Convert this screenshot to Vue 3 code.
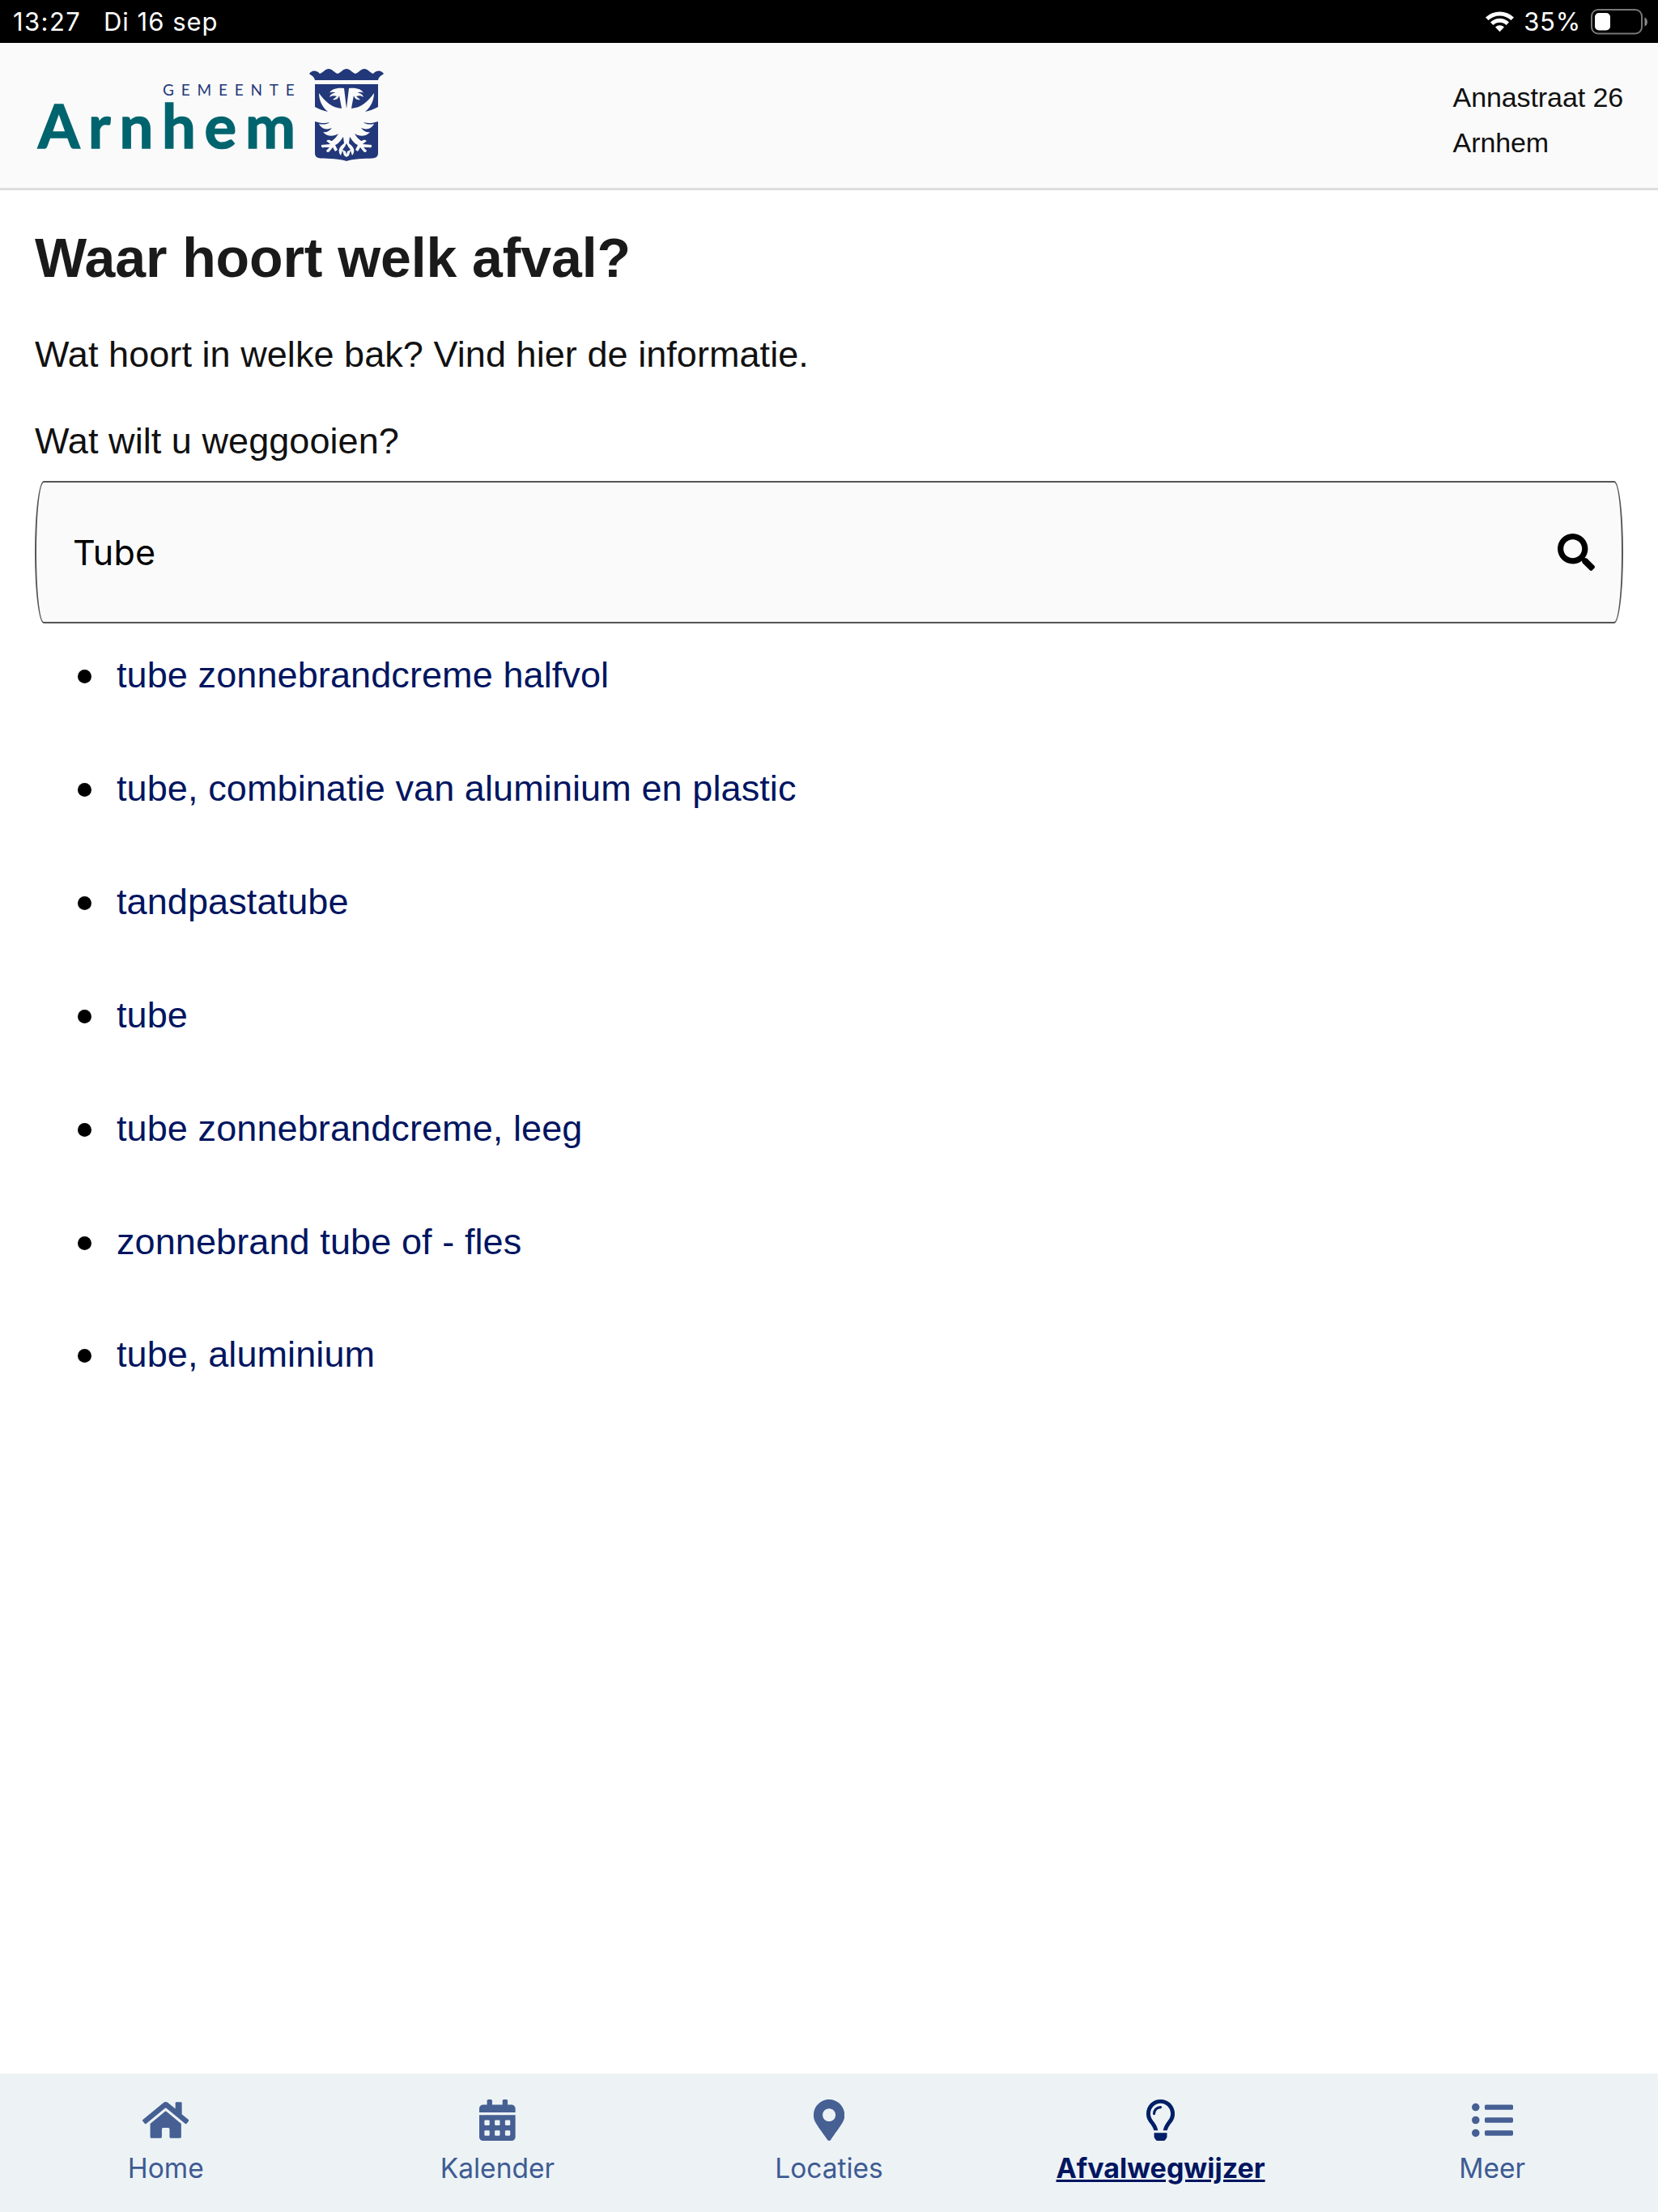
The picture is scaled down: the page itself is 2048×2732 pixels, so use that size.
<template>
  <div class="app">
    <div class="status">
      <span class="time">13:27</span>
      <span class="date">Di 16 sep</span>
      <svg class="wifi" viewBox="0 0 36 27">
        <path d="M0.500 8.500A25.500 25.500 0 0 1 35.500 8.500L32 12A20.500 20.500 0 0 0 4 12Z"/>
        <path d="M6.500 14.500A16.500 16.500 0 0 1 29.500 14.500L26 18A11.500 11.500 0 0 0 10 18Z"/>
        <path d="M12.500 20.500A8 8 0 0 1 23.500 20.500L18 26.300Z"/>
      </svg>
      <span class="percent">35%</span>
      <svg class="battery" viewBox="0 0 70 32">
        <rect x="1" y="1" width="62" height="29.500" rx="8" class="battery-case"/>
        <rect x="5" y="5" width="19" height="21.500" rx="5" fill="#fff"/>
        <path d="M66.500 10.500C71 12 71 20 66.500 21.500Z" fill="#8a8a8a"/>
      </svg>
    </div>

    <header class="header">
      <div class="logo">
        <div class="logo-text">
          <span class="logo-small">GEMEENTE</span>
          <span class="logo-big">Arnhem</span>
        </div>
        <svg class="shield" viewBox="0 0 92 114">
          <g fill="#22387a">
            <path d="M0 6C3 2 8 1 13 6C18 4 20 0 24 0C28 0 30 4 35 6C40 4 42 0 46 0C50 0 52 4 57 6C62 4 64 0 68 0C72 0 74 4 79 6C84 1 89 2 92 6C90 8 86 9 85 14H7C6 9 2 8 0 6Z"/>
            <path d="M7 19H85V104C85 109 82 110 78 110.500C68 111 54 111 46 114C38 111 24 111 14 110.500C10 110 7 109 7 104Z"/>
          </g>
          <g fill="#fafafa">
            <path d="M43 24C34 23 27 25 25 30C28 28 31 29 32 30C28 30 26 32 25 35C28 33 31 33 34 34L29 38C34 39 36 36 37 33C38 38 39 43 40 49C28 48 20 41 12 30C12 39 16 47 23 53C18 52 12 50 7 47V65C13 67 19 68 25 66C22 69 16 69 12 68C15 74 21 76 28 73C25 77 21 79 17 78C22 84 30 84 36 80C34 84 31 87 28 89C26 89 25 86 21 89L26 93L15 94C14 97 17 98 18 97L25 97L21 101C22 104 24 103 25 102L29 97L32 102L35 100L32 94C37 92 39 88 42 84L43 92C36 97 35 102 39 107L41 101L43 107L46 109L49 107L51 101L53 107C57 102 56 97 49 92L50 84C53 88 55 92 60 94L57 100L60 102L63 97L67 102C68 103 70 104 71 101L67 97L74 97C75 98 78 97 77 94L66 93L71 89C67 86 66 89 64 89C61 87 58 84 56 80C62 84 70 84 75 78C71 79 67 77 64 73C71 76 77 74 80 68C76 69 70 69 67 66C73 68 79 67 85 65V47C80 50 74 52 69 53C76 47 80 39 80 30C72 41 64 48 52 49C53 43 54 38 55 33C56 36 58 39 63 38L58 34C61 33 64 33 67 35C66 32 64 30 60 30C61 29 64 28 67 30C65 25 58 23 49 24L46 49Z"/>
          </g>
          <path d="M44 96L41 100L45 102L46 106L47 102L51 100L48 96L46 92Z" fill="#22387a"/>
        </svg>
      </div>
      <div class="address">
        <div>Annastraat 26</div>
        <div>Arnhem</div>
      </div>
    </header>

    <main class="content">
      <h1>Waar hoort welk afval?</h1>
      <p class="intro">Wat hoort in welke bak? Vind hier de informatie.</p>
      <label class="label" for="search">Wat wilt u weggooien?</label>
      <div class="search">
        <input id="search" v-model="query" type="text"/>
        <svg class="search-icon" viewBox="0 0 512 512">
          <path d="M505 442.700L405.300 343c-4.500-4.500-10.600-7-17-7H372c27.600-35.300 44-79.700 44-128C416 93.100 322.900 0 208 0S0 93.100 0 208s93.100 208 208 208c48.300 0 92.700-16.400 128-44v16.300c0 6.400 2.500 12.500 7 17l99.700 99.700c9.400 9.400 24.600 9.400 33.900 0l28.300-28.300c9.400-9.400 9.400-24.600.1-34zM208 336c-70.700 0-128-57.200-128-128 0-70.700 57.200-128 128-128 70.700 0 128 57.200 128 128 0 70.700-57.200 128-128 128z"/>
        </svg>
      </div>
      <ul class="results">
        <li v-for="item in results" :key="item"><a>{{ item }}</a></li>
      </ul>
    </main>

    <nav class="nav">
      <a v-for="tab in tabs" :key="tab.label" :class="`tab ${tab.active?'active':''}`">
        <svg class="tab-icon" :viewBox="tab.box">
          <path :d="tab.path" fill-rule="evenodd"/>
        </svg>
        <span class="tab-label">{{ tab.label }}</span>
      </a>
    </nav>
  </div>
</template>

<script setup>

import {ref} from "vue";

let query = ref("Tube")

let results = [
  "tube zonnebrandcreme halfvol",
  "tube, combinatie van aluminium en plastic",
  "tandpastatube",
  "tube",
  "tube zonnebrandcreme, leeg",
  "zonnebrand tube of - fles",
  "tube, aluminium"
]

// one rounded day cell of the calendar icon
let day = (x, y) => `M${x + 12} ${y}h40a12 12 0 0 1 12 12v40a12 12 0 0 1-12 12h-40a12 12 0 0 1-12-12v-40a12 12 0 0 1 12-12z`
let days = [256, 384].map(y => [64, 192, 320].map(x => day(x, y)).join("")).join("")

let tabs = [
  {
    label: "Home",
    box: "0 0 576 512",
    path: "M280.370 148.260L96 300.110V464a16 16 0 0 0 16 16l112.060-.29a16 16 0 0 0 15.920-16V368a16 16 0 0 1 16-16h64a16 16 0 0 1 16 16v95.640a16 16 0 0 0 16 16.050L464 480a16 16 0 0 0 16-16V300L295.670 148.260a12.190 12.190 0 0 0-15.300 0zM571.600 251.470L488 182.560V44.050a12 12 0 0 0-12-12h-56a12 12 0 0 0-12 12v72.610L318.470 43a48 48 0 0 0-61 0L4.340 251.470a12 12 0 0 0-1.600 16.900l25.500 31A12 12 0 0 0 45.150 301l235.220-193.740a12.190 12.190 0 0 1 15.300 0L530.900 301a12 12 0 0 0 16.900-1.600l25.500-31a12 12 0 0 0-1.700-16.930z"
  },
  {
    label: "Kalender",
    box: "0 0 448 512",
    path: "M0 464c0 26.500 21.500 48 48 48h352c26.500 0 48-21.500 48-48V192H0zM400 64h-48V16c0-8.800-7.200-16-16-16h-32c-8.800 0-16 7.200-16 16v48H160V16c0-8.800-7.200-16-16-16h-32c-8.800 0-16 7.200-16 16v48H48C21.500 64 0 85.500 0 112v48h448v-48c0-26.500-21.500-48-48-48z" + days
  },
  {
    label: "Locaties",
    box: "0 0 384 512",
    path: "M172.268 501.670C26.970 291.031 0 269.413 0 192 0 85.961 85.961 0 192 0s192 85.961 192 192c0 77.413-26.970 99.031-172.268 309.670-9.535 13.774-29.930 13.773-39.464 0zM192 272c44.183 0 80-35.817 80-80s-35.817-80-80-80-80 35.817-80 80 35.817 80 80 80z"
  },
  {
    label: "Afvalwegwijzer",
    active: true,
    box: "0 0 352 512",
    path: "M176 0C76 0 0 78 0 176c0 70 32 100 62 142 16 24 28 48 32 66h50c-4-28-18-58-36-86-30-44-58-70-58-122C50 106 106 48 176 48s126 58 126 128c0 52-28 78-58 122-18 28-32 58-36 86h50c4-18 16-42 32-66 30-42 62-72 62-142C352 78 276 0 176 0zM96 415h160v45c0 8-2 14-6 20l-14 20a27 27 0 0 1-22 12h-76a27 27 0 0 1-22-12l-14-20c-4-6-6-12-6-20zM176 80a96 96 0 0 0-96 96a16 16 0 0 0 32 0a64 64 0 0 1 64-64a16 16 0 0 0 0-32z"
  },
  {
    label: "Meer",
    box: "0 0 512 512",
    path: "M48 48a48 48 0 1 0 48 48 48 48 0 0 0-48-48zm0 160a48 48 0 1 0 48 48 48 48 0 0 0-48-48zm0 160a48 48 0 1 0 48 48 48 48 0 0 0-48-48zM176 64h320a16 16 0 0 1 16 16v32a16 16 0 0 1-16 16H176a16 16 0 0 1-16-16V80a16 16 0 0 1 16-16zm0 160h320a16 16 0 0 1 16 16v32a16 16 0 0 1-16 16H176a16 16 0 0 1-16-16v-32a16 16 0 0 1 16-16zm0 160h320a16 16 0 0 1 16 16v32a16 16 0 0 1-16 16H176a16 16 0 0 1-16-16v-32a16 16 0 0 1 16-16z"
  }
]
</script>

<style>
body {
  margin: 0;
  background-color: #fff;
}
</style>

<style scoped>
.app {
  display: flex;
  flex-direction: column;
  width: 100%;
  height: 100vh;
  overflow: hidden;
  font-family: "Liberation Sans", Helvetica, sans-serif;
  color: #111;
}

.status {
  display: flex;
  align-items: center;
  flex: none;
  height: 53px;
  padding: 0 13px 0 16px;
  box-sizing: border-box;
  background-color: #000;
  color: #fff;
  font-family: Inter, sans-serif;
  font-size: 31px;
}

.time {
  width: 112px;
  letter-spacing: 1.4px;
}

.date {
  letter-spacing: 1px;
}

.wifi {
  width: 37px;
  height: 27px;
  margin-left: auto;
  fill: #fff;
}

.percent {
  margin: 0 12px 0 11px;
  letter-spacing: .8px;
}

.battery {
  width: 70px;
  height: 32px;
}

.battery-case {
  fill: none;
  stroke: #777;
  stroke-width: 2;
}

.header {
  display: flex;
  justify-content: space-between;
  flex: none;
  height: 182px;
  padding: 32px 43px 0 47px;
  box-sizing: border-box;
  background-color: #fafafa;
  border-bottom: 3px solid #dedede;
}

.logo {
  display: flex;
}

.logo-text {
  display: flex;
  flex-direction: column;
  width: 335px;
  font-family: Lato, sans-serif;
  white-space: nowrap;
}

.logo-small {
  margin: 15px 0 0 154px;
  font-size: 19px;
  line-height: 22px;
  letter-spacing: 8.800px;
  color: #22387a;
}

.logo-big {
  margin-top: -3px;
  font-size: 74px;
  line-height: 72px;
  font-weight: bold;
  letter-spacing: 10.800px;
  color: #00646e;
  -webkit-text-stroke: 1.500px #00646e;
}

.shield {
  width: 92px;
  height: 114px;
}

.address {
  font-size: 34px;
  line-height: 56px;
  letter-spacing: -.1px;
  padding-top: 7px;
  color: #111;
}

.content {
  flex: 1;
  padding: 0 43px;
}

h1 {
  margin: 43px 0 0;
  font-size: 68px;
  line-height: 80px;
  letter-spacing: -.1px;
  color: #1a1a1a;
}

.intro {
  margin: 50px 0 0;
  font-size: 45px;
  line-height: 60px;
  letter-spacing: .06px;
}

.label {
  display: block;
  margin-top: 47px;
  font-size: 45px;
  line-height: 60px;
  letter-spacing: .06px;
}

.search {
  display: flex;
  align-items: center;
  height: 176px;
  margin-top: 19px;
  padding: 0 33px 0 45px;
  box-sizing: border-box;
  border: 2px solid #555;
  border-radius: 11px / 50%;
  background-color: #fafafa;
}

.search input {
  flex: 1;
  padding: 0;
  border: none;
  outline: none;
  background: none;
  font-family: Inter, sans-serif;
  font-size: 43px;
  letter-spacing: .2px;
  color: #000;
}

.search-icon {
  width: 46px;
  height: 46px;
}

.results {
  margin: -4px 0 0;
  padding: 0 0 0 57px;
  list-style: none;
}

.results li {
  display: flex;
  align-items: center;
  gap: 31px;
  height: 139.850px;
  font-size: 45px;
  letter-spacing: .1px;
  color: #001560;
}

.results a {
  margin-top: -3px;
}

.results li::before {
  content: "";
  width: 17px;
  height: 17px;
  margin-left: -4px;
  border-radius: 50%;
  background-color: #000;
}

.nav {
  display: flex;
  flex: none;
  height: 171px;
  background-color: #edf3f5;
  font-family: Inter, sans-serif;
}

.tab {
  display: flex;
  flex-direction: column;
  align-items: center;
  flex: 1 1 0;
  padding-top: 32px;
  color: #3f5b93;
}

.tab-icon {
  height: 51px;
  fill: #466094;
}

.tab-label {
  margin-top: 13px;
  font-size: 33.500px;
  line-height: 42px;
}

.active {
  color: #001560;
}

.active .tab-icon {
  fill: #001f66;
}

.active .tab-label {
  font-size: 34px;
  font-weight: bold;
  text-decoration: underline;
}
</style>
